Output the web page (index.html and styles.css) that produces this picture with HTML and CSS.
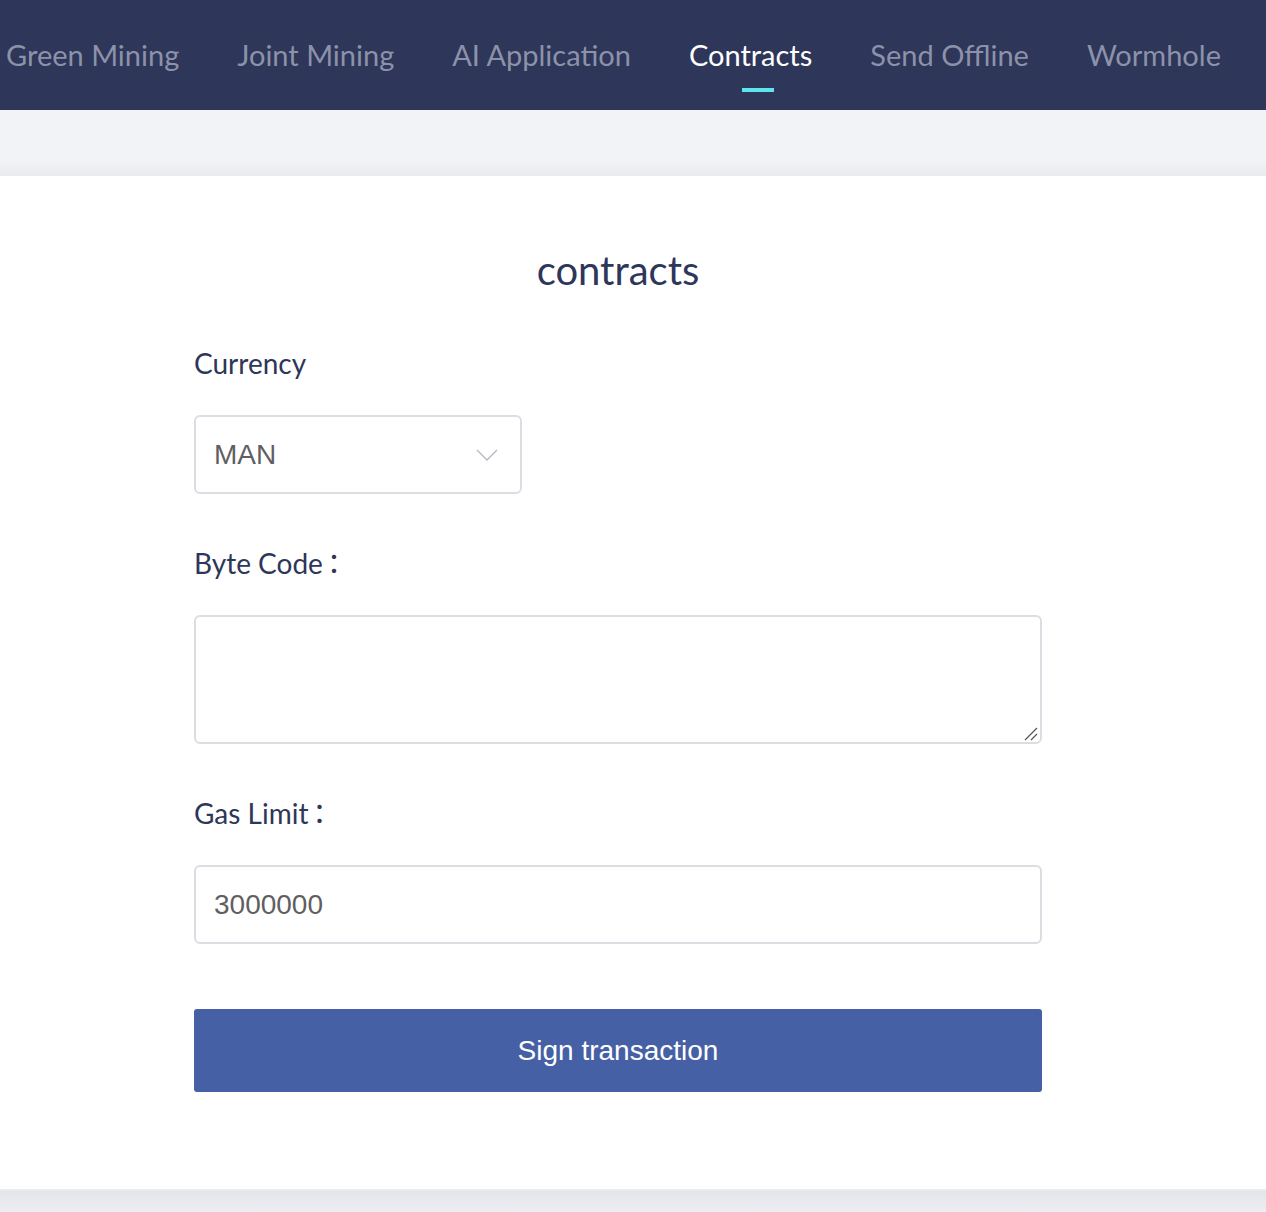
FILE: index.html
```html
<!DOCTYPE html>
<html lang="en">
<head>
<meta charset="utf-8">
<title>Contracts</title>
<link rel="stylesheet" href="styles.css">
</head>
<body>
<header class="nav">
  <a class="nav-item">Green Mining</a>
  <a class="nav-item">Joint Mining</a>
  <a class="nav-item">AI Application</a>
  <a class="nav-item active">Contracts</a>
  <a class="nav-item">Send Offline</a>
  <a class="nav-item">Wormhole</a>
</header>
<div class="band"></div>
<main class="panel">
  <h1 class="title">contracts</h1>
  <form class="form">
    <label class="label">Currency</label>
    <div class="select">
      <span class="select-value">MAN</span>
      <svg class="chevron" width="22" height="12" viewBox="0 0 22 12"><path d="M1 1 L11 11 L21 1" fill="none" stroke="#b4b6c0" stroke-width="1.3"/></svg>
    </div>
    <label class="label">Byte Code<span class="colon">：</span></label>
    <div class="textarea-wrap">
      <textarea class="textarea"></textarea>
      <svg class="grip" width="16" height="16" viewBox="0 0 16 16"><path d="M15 3 L3 15 M15 9 L9 15" fill="none" stroke="#555" stroke-width="1.2"/></svg>
    </div>
    <label class="label">Gas Limit<span class="colon">：</span></label>
    <input class="input" type="text" value="3000000">
    <button class="btn" type="button">Sign transaction</button>
  </form>
</main>
<div class="footer-band"></div>
</body>
</html>
```
FILE: styles.css
```css
* { box-sizing: border-box; }
html, body { margin: 0; padding: 0; }
body {
  font-family: Lato, "Noto Sans", "Noto Sans CJK SC", sans-serif;
  background: #f2f3f7;
  color: #2e3659;
}
.nav {
  height: 110px;
  background: #2e3659;
  display: flex;
  align-items: center;
  gap: 58px;
  padding-left: 6px;
  white-space: nowrap;
  overflow: hidden;
}
.nav-item {
  position: relative;
  font-size: 29px;
  color: #8c92a9;
  font-weight: 400;
  line-height: 108px;
}
.nav-item.active { color: #ffffff; }
.nav-item.active::after {
  content: "";
  position: absolute;
  left: 50%;
  margin-left: -9px;
  width: 32px;
  height: 4px;
  bottom: 17px;
  background: #5de6ee;
}
.band {
  height: 66px;
  background: linear-gradient(#f2f3f7 0, #f2f3f7 50px, #eaebef 66px);
}
.panel {
  background: #fff;
  height: 1013px;
  padding-top: 68px;
}
.title {
  margin: 0;
  text-align: center;
  font-size: 40px;
  font-weight: 400;
  color: #2e3659;
  line-height: 52px;
  padding-right: 30px;
}
.form {
  width: 848px;
  margin: 0 0 0 194px;
  display: flex;
  flex-direction: column;
  align-items: flex-start;
  padding-top: 47px;
}
.label {
  height: 40px;
  font-size: 28px;
  line-height: 40px;
  color: #2e3659;
  margin-bottom: 32px;
  white-space: nowrap;
}
.colon {
  font-family: "Noto Sans CJK SC", sans-serif;
  display: inline-block;
  vertical-align: top;
  line-height: 36px;
  height: 40px;
  width: 22px;
  margin-left: 4px;
  text-align: left;
}
.select {
  width: 328px;
  height: 79px;
  border: 2px solid #dcdde3;
  border-radius: 6px;
  display: flex;
  align-items: center;
  justify-content: space-between;
  padding: 0 22px 0 18px;
  margin-bottom: 49px;
}
.select-value, .input {
  font-family: "Liberation Sans", Arial, sans-serif;
  font-size: 28px;
  color: #5f5f63;
}
.textarea-wrap {
  position: relative;
  width: 848px;
  height: 129px;
  margin: 0 0 49px;
}
.textarea {
  display: block;
  width: 848px;
  height: 129px;
  border: 2px solid #dcdde3;
  border-radius: 6px;
  margin: 0;
  resize: none;
  font-family: "Liberation Sans", Arial, sans-serif;
}
.grip {
  position: absolute;
  right: 4px;
  bottom: 3px;
}
.input {
  width: 848px;
  height: 79px;
  border: 2px solid #dcdde3;
  border-radius: 6px;
  padding: 0 18px;
  margin: 0 0 65px;
  outline: none;
}
.btn {
  width: 848px;
  height: 83px;
  border: 0;
  border-radius: 3px;
  background: #4660a5;
  color: #fff;
  font-family: "Liberation Sans", Arial, sans-serif;
  font-size: 28px;
}
.footer-band {
  height: 30px;
  border-top: 2px solid #ebecef;
  background: linear-gradient(#e4e5ea, #f0f1f5);
}
```
